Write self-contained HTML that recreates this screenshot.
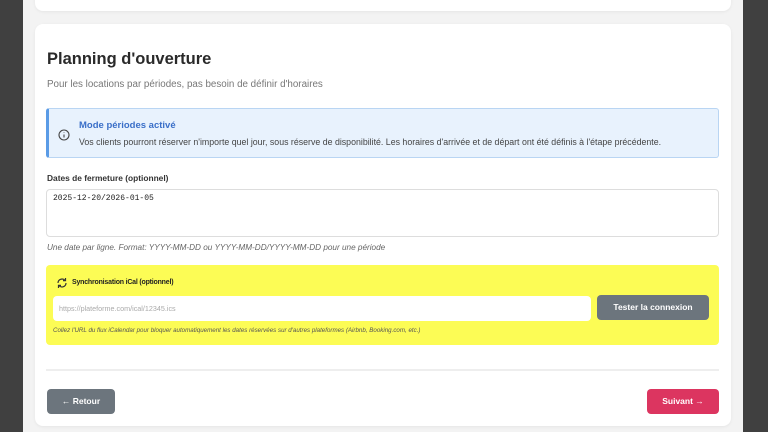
<!DOCTYPE html><html><head><meta charset="utf-8"><style>
*{box-sizing:border-box;margin:0;padding:0}
body{width:768px;height:432px;overflow:hidden;background:#404040;font-family:"Liberation Sans",sans-serif;position:relative}
.bg{position:absolute;left:23px;top:0;width:720px;height:432px;background:#f3f3f3}
.card{position:absolute;background:#fff;border-radius:8px;box-shadow:0 1px 3px rgba(0,0,0,.06)}
.t{position:absolute;white-space:nowrap}
</style></head><body>
<div class="bg"></div>
<div class="card" style="left:35px;top:-10px;width:696px;height:21px"></div>
<div class="card" style="left:35px;top:24px;width:696px;height:402px"></div>
<div class="t" style="left:47px;top:50px;font-size:16.5px;font-weight:bold;color:#2a2a2a">Planning d'ouverture</div>
<div class="t" style="left:47px;top:79px;font-size:9.8px;color:#777">Pour les locations par périodes, pas besoin de définir d'horaires</div>
<div style="position:absolute;left:46px;top:108px;width:673px;height:50px;background:#e8f2fd;border:1px solid #b9d5f3;border-left:3px solid #5a9be6;border-radius:3px"></div>
<svg style="position:absolute;left:58px;top:129px" width="12" height="12" viewBox="0 0 12 12"><circle cx="6" cy="6" r="5" fill="none" stroke="#444" stroke-width="1.1"/><path d="M6 5.5v3M6 3.5v.5" stroke="#444" stroke-width="1.1"/></svg>
<div class="t" style="left:79px;top:120px;font-size:9.5px;font-weight:bold;color:#3a6fc8">Mode périodes activé</div>
<div class="t" style="left:79px;top:137px;font-size:8.8px;color:#444">Vos clients pourront réserver n'importe quel jour, sous réserve de disponibilité. Les horaires d'arrivée et de départ ont été définis à l'étape précédente.</div>
<div class="t" style="left:47px;top:173px;font-size:8.4px;font-weight:bold;color:#333">Dates de fermeture (optionnel)</div>
<div style="position:absolute;left:46px;top:189px;width:673px;height:48px;border:1px solid #ddd;border-radius:4px;background:#fff"></div>
<div class="t" style="left:53px;top:194px;font-size:8px;font-family:'Liberation Mono',monospace;color:#222">2025-12-20/2026-01-05</div>
<div class="t" style="left:47px;top:243px;font-size:8.2px;font-style:italic;color:#666">Une date par ligne. Format: YYYY-MM-DD ou YYYY-MM-DD/YYYY-MM-DD pour une période</div>
<div style="position:absolute;left:46px;top:265px;width:673px;height:80px;background:#fcfc55;border-radius:4px"></div>
<svg style="position:absolute;left:56px;top:277px" width="12" height="12" viewBox="0 0 12 12" fill="none" stroke="#333" stroke-width="1.2"><path d="M2 6a4 4 0 0 1 7-2.6M10 6a4 4 0 0 1-7 2.6"/><path d="M9.5 1v2.6H7M2.5 11V8.4H5"/></svg>
<div class="t" style="left:72px;top:279px;font-size:7px;font-weight:bold;color:#222;letter-spacing:-0.2px">Synchronisation iCal (optionnel)</div>
<div style="position:absolute;left:53px;top:296px;width:538px;height:25px;background:#fff;border-radius:4px"></div>
<div class="t" style="left:59px;top:304px;font-size:7.2px;color:#aaa">https://plateforme.com/ical/12345.ics</div>
<div style="position:absolute;left:597px;top:295px;width:112px;height:25px;background:#6c757d;border-radius:4px;color:#fff;font-size:8.5px;font-weight:bold;text-align:center;line-height:25px">Tester la connexion</div>
<div class="t" style="left:53px;top:327px;font-size:6.2px;font-style:italic;color:#555">Collez l'URL du flux iCalendar pour bloquer automatiquement les dates réservées sur d'autres plateformes (Airbnb, Booking.com, etc.)</div>
<div style="position:absolute;left:46px;top:369px;width:673px;height:2px;background:#eee"></div>
<div style="position:absolute;left:47px;top:389px;width:68px;height:25px;background:#6c757d;border-radius:4px;color:#fff;font-size:8.5px;font-weight:bold;text-align:center;line-height:25px">← Retour</div>
<div style="position:absolute;left:647px;top:389px;width:72px;height:25px;background:#dc3560;border-radius:4px;color:#fff;font-size:8.5px;font-weight:bold;text-align:center;line-height:25px">Suivant →</div>
</body></html>
